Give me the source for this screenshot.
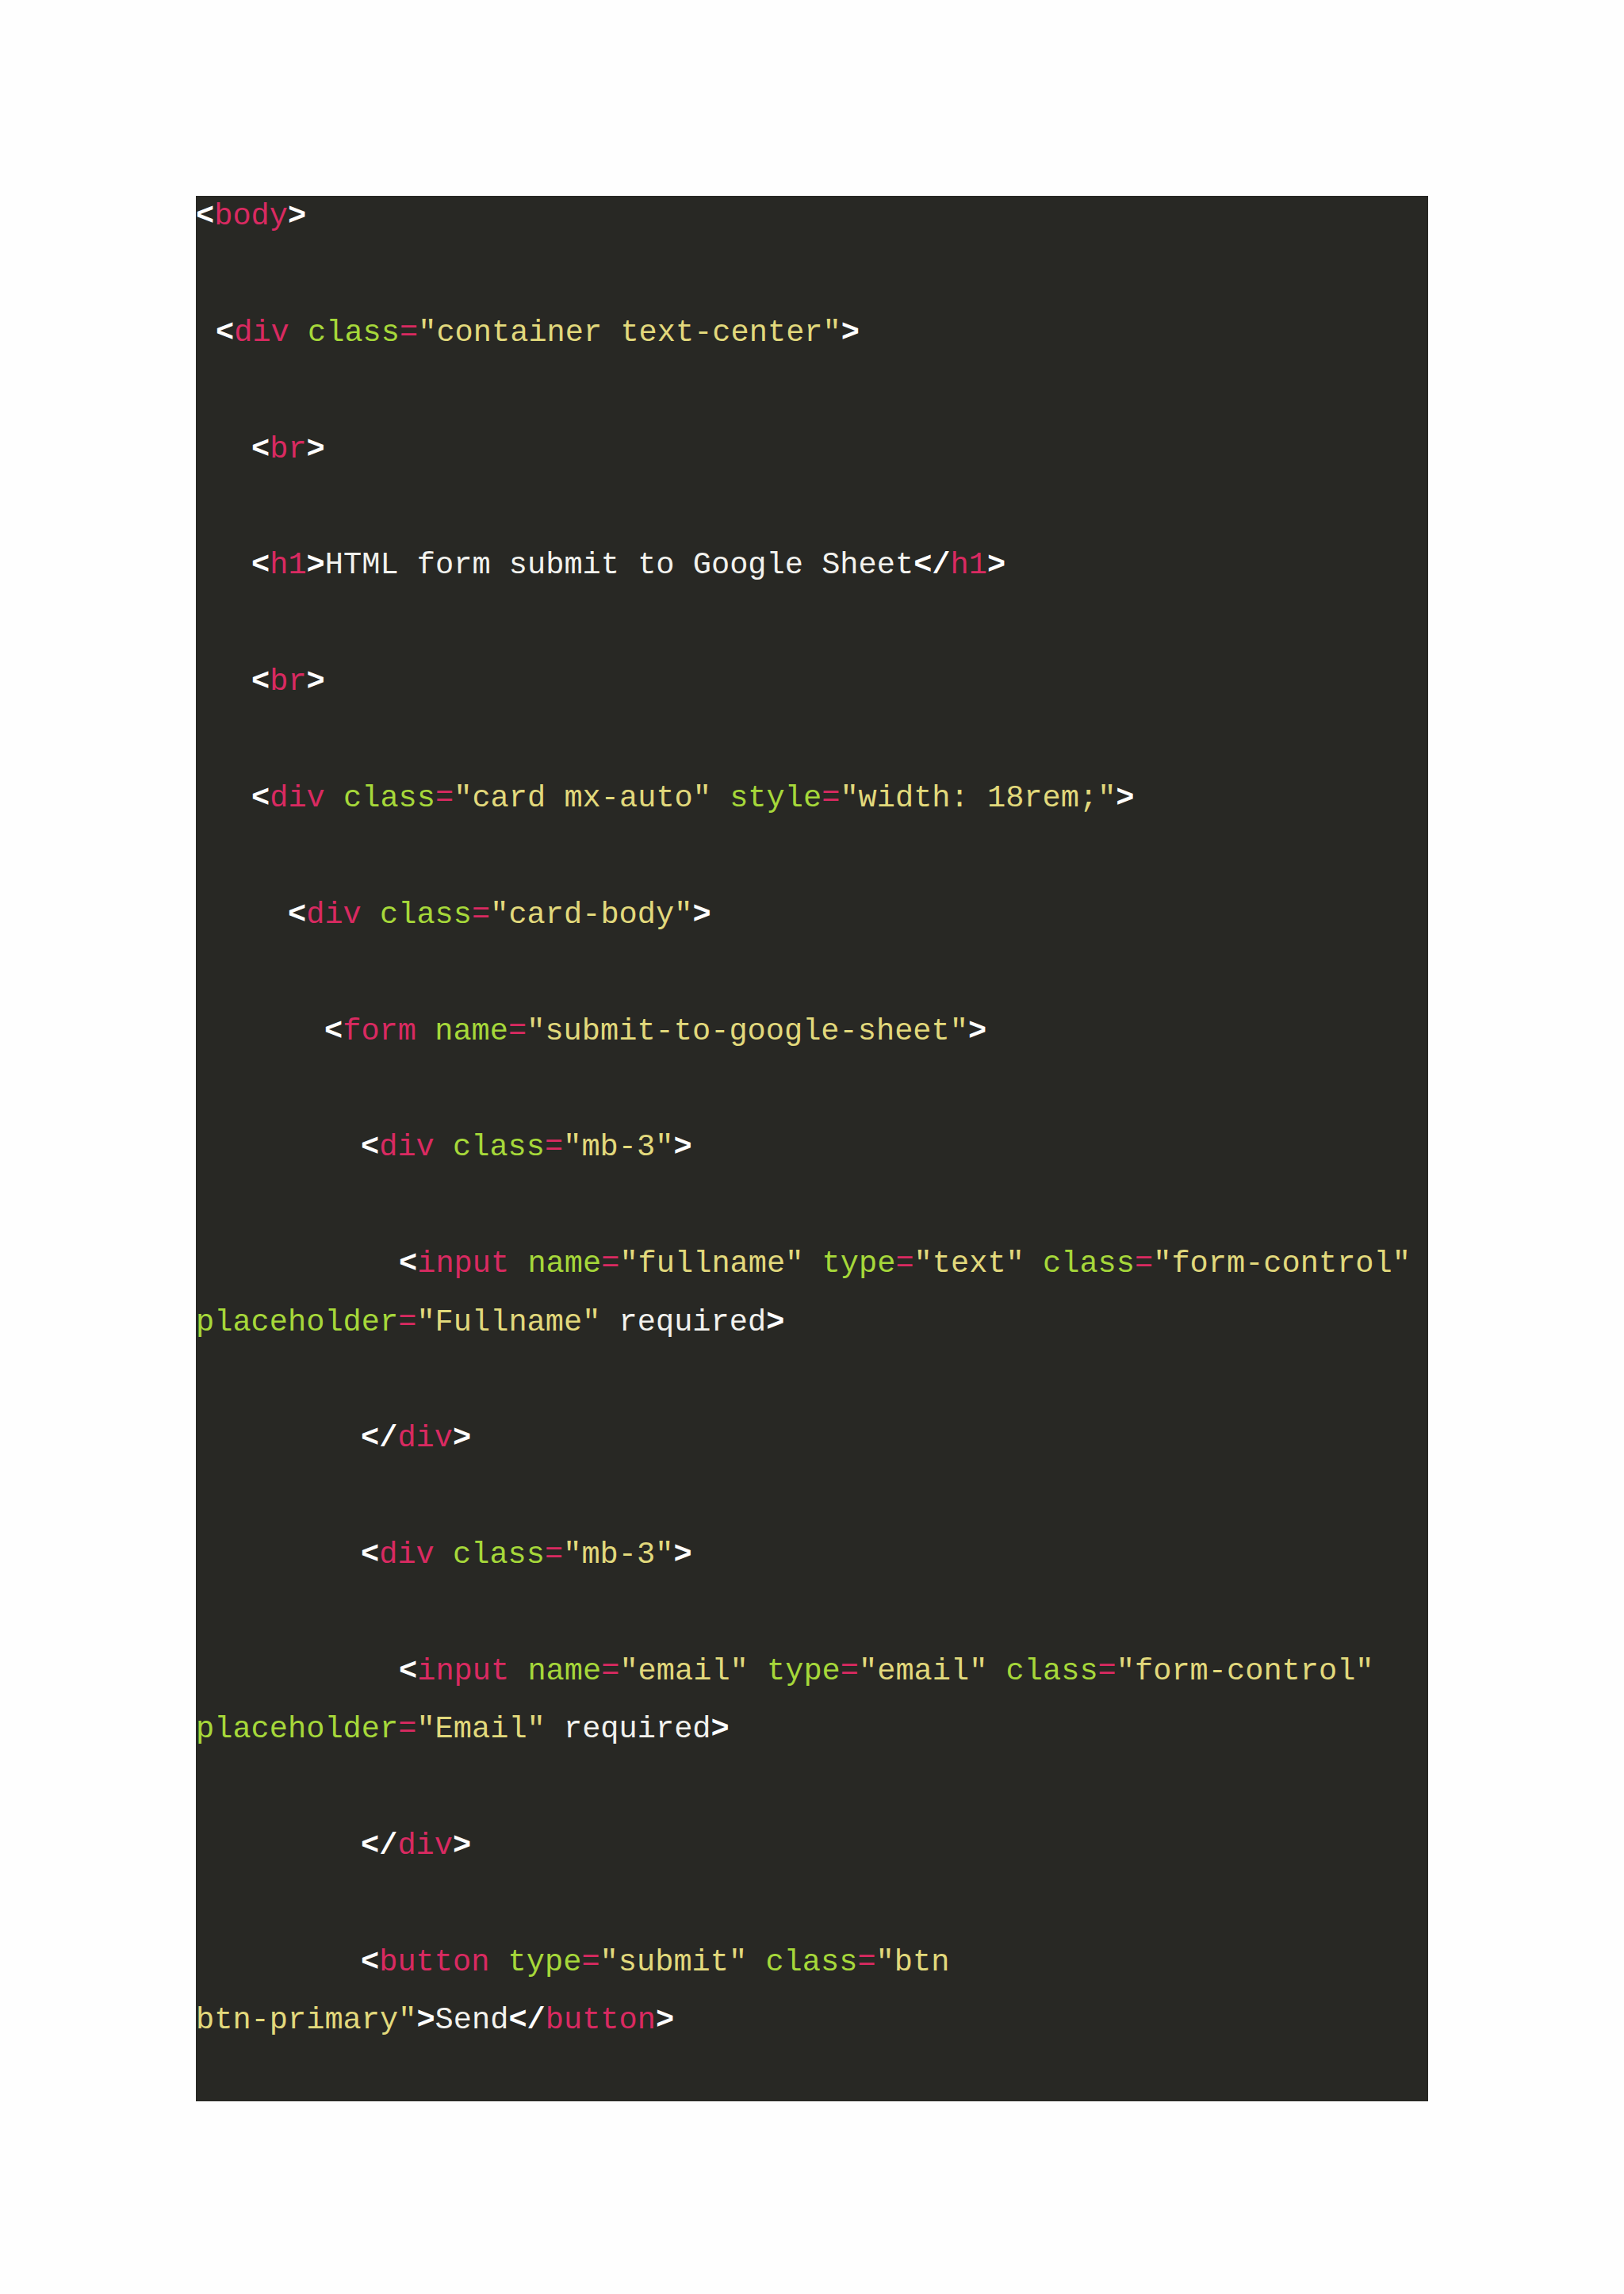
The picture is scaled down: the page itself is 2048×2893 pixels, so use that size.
import React from "react";

const T = ({ c }: { c: string }) => <span className="text-[#d92a61]">{c}</span>;
const A = ({ c }: { c: string }) => <span className="text-[#a6d83a]">{c}</span>;
const S = ({ c }: { c: string }) => <span className="text-[#e2d97c]">{c}</span>;
const P = ({ c }: { c: string }) => <span className="font-bold text-white">{c}</span>;
const E = () => <span className="text-[#d92a61]">=</span>;
const W = ({ c }: { c: string }) => <span className="text-[#f2f2ee]">{c}</span>;

const Attr = ({ n, v }: { n: string; v: string }) => (
  <>
    <A c={n} />
    <E />
    <S c={`"${v}"`} />
  </>
);

const Line = ({ pl, children }: { pl: string; children: React.ReactNode }) => (
  <div className={`whitespace-pre ${pl} mb-[73.4px]`}>{children}</div>
);

export default function App() {
  return (
    <div className="min-h-[2893px] w-[2048px] bg-[#fefefe] pt-[247px] pl-[247px]">
      <div className="h-[2403px] w-[1554px] overflow-hidden bg-[#282824]">
        <div
          className="-mt-[10px] text-[38.67px] leading-[73.4px]"
          style={{ fontFamily: '"Liberation Mono", "Courier New", monospace' }}
        >
          <Line pl="pl-0">
            <P c="<" />
            <T c="body" />
            <P c=">" />
          </Line>
          <Line pl="pl-[25px]">
            <P c="<" />
            <T c="div" />
            <W c=" " />
            <Attr n="class" v="container text-center" />
            <P c=">" />
          </Line>
          <Line pl="pl-[70px]">
            <P c="<" />
            <T c="br" />
            <P c=">" />
          </Line>
          <Line pl="pl-[70px]">
            <P c="<" />
            <T c="h1" />
            <P c=">" />
            <W c="HTML form submit to Google Sheet" />
            <P c="</" />
            <T c="h1" />
            <P c=">" />
          </Line>
          <Line pl="pl-[70px]">
            <P c="<" />
            <T c="br" />
            <P c=">" />
          </Line>
          <Line pl="pl-[70px]">
            <P c="<" />
            <T c="div" />
            <W c=" " />
            <Attr n="class" v="card mx-auto" />
            <W c=" " />
            <Attr n="style" v="width: 18rem;" />
            <P c=">" />
          </Line>
          <Line pl="pl-[116px]">
            <P c="<" />
            <T c="div" />
            <W c=" " />
            <Attr n="class" v="card-body" />
            <P c=">" />
          </Line>
          <Line pl="pl-[162px]">
            <P c="<" />
            <T c="form" />
            <W c=" " />
            <Attr n="name" v="submit-to-google-sheet" />
            <P c=">" />
          </Line>
          <Line pl="pl-[208px]">
            <P c="<" />
            <T c="div" />
            <W c=" " />
            <Attr n="class" v="mb-3" />
            <P c=">" />
          </Line>
          <div className="mb-[73.4px] whitespace-pre">
            <div className="pl-[256px]">
              <P c="<" />
              <T c="input" />
              <W c=" " />
              <Attr n="name" v="fullname" />
              <W c=" " />
              <Attr n="type" v="text" />
              <W c=" " />
              <Attr n="class" v="form-control" />
            </div>
            <div>
              <Attr n="placeholder" v="Fullname" />
              <W c=" required" />
              <P c=">" />
            </div>
          </div>
          <Line pl="pl-[208px]">
            <P c="</" />
            <T c="div" />
            <P c=">" />
          </Line>
          <Line pl="pl-[208px]">
            <P c="<" />
            <T c="div" />
            <W c=" " />
            <Attr n="class" v="mb-3" />
            <P c=">" />
          </Line>
          <div className="mb-[73.4px] whitespace-pre">
            <div className="pl-[256px]">
              <P c="<" />
              <T c="input" />
              <W c=" " />
              <Attr n="name" v="email" />
              <W c=" " />
              <Attr n="type" v="email" />
              <W c=" " />
              <Attr n="class" v="form-control" />
            </div>
            <div>
              <Attr n="placeholder" v="Email" />
              <W c=" required" />
              <P c=">" />
            </div>
          </div>
          <Line pl="pl-[208px]">
            <P c="</" />
            <T c="div" />
            <P c=">" />
          </Line>
          <div className="mb-[73.4px] whitespace-pre">
            <div className="pl-[208px]">
              <P c="<" />
              <T c="button" />
              <W c=" " />
              <Attr n="type" v="submit" />
              <W c=" " />
              <A c="class" />
              <E />
              <S c={'"btn'} />
            </div>
            <div>
              <S c={'btn-primary"'} />
              <P c=">" />
              <W c="Send" />
              <P c="</" />
              <T c="button" />
              <P c=">" />
            </div>
          </div>
        </div>
      </div>
    </div>
  );
}
